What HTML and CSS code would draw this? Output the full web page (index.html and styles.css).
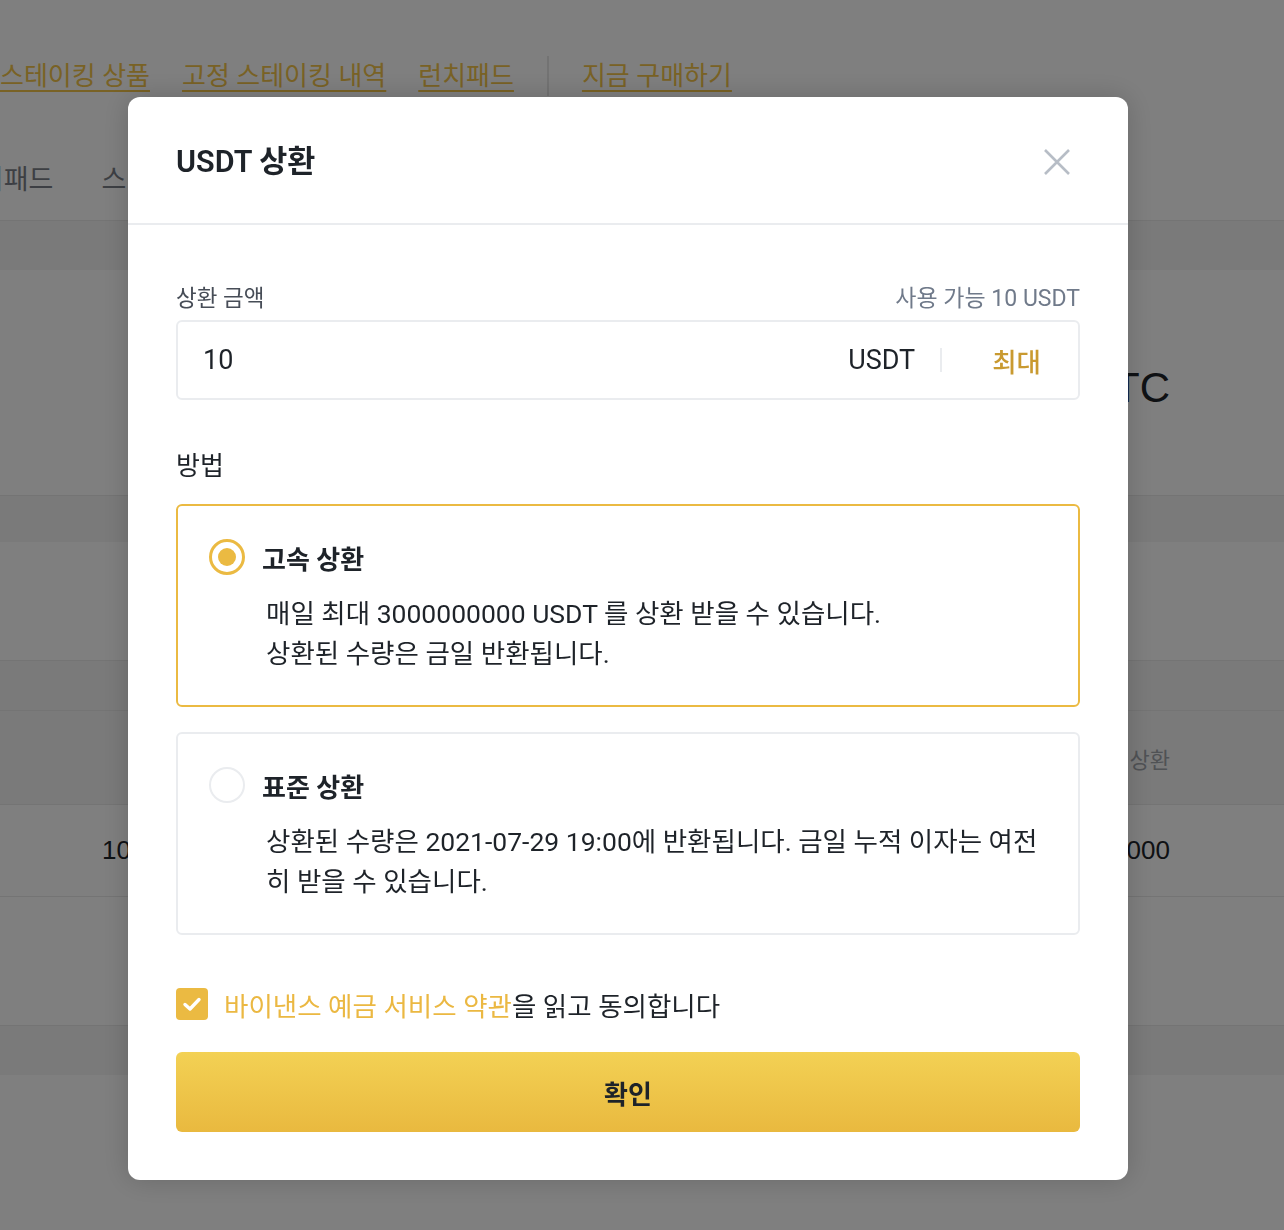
FILE: index.html
```html
<!DOCTYPE html>
<html lang="ko">
<head>
<meta charset="utf-8">
<title>USDT 상환</title>
<link rel="stylesheet" href="styles.css">
</head>
<body>
<div class="page">
  <nav class="topbar">
    <a class="toplink">스테이킹 상품</a>
    <a class="toplink">고정 스테이킹 내역</a>
    <a class="toplink">런치패드</a>
    <span class="topdivider"></span>
    <a class="toplink">지금 구매하기</a>
  </nav>
  <div class="tabs">
    <span class="tab tab-first">런치패드</span>
    <span class="tab">스테이킹</span>
  </div>
  <div class="band"></div>
  <div class="hero"><span class="hero-coin">BTC</span></div>
  <div class="band band-short"></div>
  <div class="blank blank-mid"></div>
  <div class="band"></div>
  <div class="thead"><span class="thead-cell">고속 상환</span></div>
  <div class="trow"><span class="trow-left">10 USDT</span><span class="trow-right">1000</span></div>
  <div class="blank blank-low"></div>
  <div class="band"></div>
  <div class="blank"></div>
</div>

<div class="overlay">
  <div class="modal">
    <div class="modal-header">
      <h2 class="modal-title">USDT 상환</h2>
      <button class="close-btn" aria-label="닫기">
        <svg width="28" height="28" viewBox="0 0 28 28"><path d="M2 2 L26 26 M26 2 L2 26" stroke="#b7bdc6" stroke-width="2.6" fill="none"/></svg>
      </button>
    </div>
    <div class="modal-body">
      <div class="label-row">
        <span class="label">상환 금액</span>
        <span class="available">사용 가능 10 USDT</span>
      </div>
      <div class="amount-input">
        <span class="amount-value">10</span>
        <span class="amount-unit">USDT</span>
        <span class="amount-divider"></span>
        <span class="amount-max">최대</span>
      </div>

      <div class="method-title">방법</div>

      <div class="option option-active">
        <div class="option-head">
          <span class="radio radio-on"><span class="radio-dot"></span></span>
          <span class="option-name">고속 상환</span>
        </div>
        <p class="option-desc">매일 최대 3000000000 USDT 를 상환 받을 수 있습니다.<br>상환된 수량은 금일 반환됩니다.</p>
      </div>

      <div class="option">
        <div class="option-head">
          <span class="radio"></span>
          <span class="option-name">표준 상환</span>
        </div>
        <p class="option-desc">상환된 수량은 2021-07-29 19:00에 반환됩니다. 금일 누적 이자는 여전히 받을 수 있습니다.</p>
      </div>

      <label class="agree">
        <span class="checkbox">
          <svg width="32" height="32" viewBox="0 0 32 32"><path d="M9 16.5 L14 21 L23 11.5" stroke="#fff" stroke-width="3.4" stroke-linecap="round" stroke-linejoin="round" fill="none"/></svg>
        </span>
        <span class="agree-text"><span class="agree-link">바이낸스 예금 서비스 약관</span>을 읽고 동의합니다</span>
      </label>

      <button class="confirm">확인</button>
    </div>
  </div>
</div>
</body>
</html>
```

FILE: styles.css
```css
* { box-sizing: border-box; }

html, body {
  margin: 0;
  padding: 0;
}

body {
  font-family: Roboto, "Noto Sans CJK KR", sans-serif;
  color: #1e2329;
  background: #ffffff;
  overflow: hidden;
}

/* ---------- background page ---------- */
.page {
  width: 1284px;
  height: 1230px;
  overflow: hidden;
}

.topbar {
  height: 130px;
  padding-top: 22px;
  display: flex;
  align-items: center;
  gap: 32px;
}

.toplink {
  font-size: 26px;
  line-height: 40px;
  color: #f2c44a;
  text-decoration: underline;
  text-decoration-thickness: 2px;
  text-underline-offset: 5px;
  white-space: nowrap;
}

.topdivider {
  width: 2px;
  height: 40px;
  background: #e6e6e6;
  margin: 0 1px;
}

.tabs {
  height: 90px;
  padding-top: 4px;
  display: flex;
  align-items: center;
  gap: 48px;
}

.tab {
  font-size: 27px;
  color: #7a7f88;
  white-space: nowrap;
}

.tab-first {
  margin-left: -46px;
}

.band {
  height: 50px;
  background: #f5f5f5;
  border-top: 1px solid #e8e8e8;
}

.band-short { height: 47px; }

.hero {
  height: 225px;
  display: flex;
  align-items: center;
  justify-content: flex-end;
  padding-right: 114px;
  padding-top: 11px;
}

.hero-coin {
  font-family: "Liberation Sans", Arial, sans-serif;
  font-size: 42px;
  color: #1e2329;
}

.blank { height: 160px; }
.blank-mid { height: 118px; }
.blank-low { height: 128px; }

.thead {
  height: 94px;
  background: #f5f5f5;
  border-top: 1px solid #e8e8e8;
  display: flex;
  align-items: center;
  justify-content: flex-end;
  padding-right: 114px;
}

.thead-cell {
  font-size: 22px;
  color: #a0a4ab;
}

.trow {
  height: 93px;
  border-top: 1px solid #e8e8e8;
  border-bottom: 1px solid #e8e8e8;
  display: flex;
  align-items: center;
  justify-content: space-between;
  padding: 0 114px 0 102px;
}

.trow-left, .trow-right {
  font-family: "Liberation Sans", Arial, sans-serif;
  font-size: 26px;
  color: #1e2329;
}

/* ---------- overlay + modal ---------- */
.overlay {
  position: fixed;
  inset: 0;
  background: rgba(0, 0, 0, 0.5);
  padding-top: 97px;
  padding-left: 128px;
}

.modal {
  width: 1000px;
  background: #ffffff;
  border-radius: 12px;
  box-shadow: 0 0 28px rgba(0, 0, 0, 0.18);
}

.modal-header {
  height: 128px;
  padding: 4px 56px 0 48px;
  display: flex;
  align-items: center;
  justify-content: space-between;
  border-bottom: 2px solid #eaecef;
}

.modal-title {
  margin: 0;
  font-size: 30.5px;
  font-weight: 600;
  color: #1e2329;
  line-height: 40px;
}

.close-btn {
  border: 0;
  background: none;
  padding: 0;
  width: 30px;
  height: 30px;
  display: flex;
  align-items: center;
  justify-content: center;
  cursor: pointer;
}

.modal-body {
  padding: 57px 48px 48px;
}

.label-row {
  display: flex;
  justify-content: space-between;
  align-items: center;
  height: 28px;
  margin-bottom: 10px;
}

.label {
  font-size: 22.5px;
  color: #474d57;
}

.available {
  font-size: 23px;
  color: #707a8a;
}

.amount-input {
  height: 80px;
  border: 2px solid #eaecef;
  border-radius: 6px;
  display: flex;
  align-items: center;
  padding: 0 37px 0 25px;
}

.amount-value {
  flex: 1;
  font-size: 27px;
  color: #1e2329;
}

.amount-unit {
  font-size: 27px;
  color: #1e2329;
}

.amount-divider {
  width: 2px;
  height: 24px;
  background: #eaecef;
  margin: 0 50px 0 25px;
}

.amount-max {
  font-size: 26.5px;
  font-weight: 500;
  color: #c99a30;
}

.method-title {
  margin-top: 50px;
  font-size: 26px;
  line-height: 32px;
  color: #1e2329;
}

.option {
  margin-top: 25px;
  height: 203px;
  border: 2px solid #eaecef;
  border-radius: 6px;
  padding: 35px 32px 0 31px;
}

.option-active {
  margin-top: 22px;
  border-color: #ebba42;
}

.option-head {
  display: flex;
  align-items: center;
  gap: 17px;
  height: 32px;
}

.radio {
  width: 36px;
  height: 36px;
  border-radius: 50%;
  border: 2px solid #eaecef;
  display: flex;
  align-items: center;
  justify-content: center;
  flex: none;
}

.radio-on {
  border: 3px solid #ebba42;
}

.radio-dot {
  width: 18px;
  height: 18px;
  border-radius: 50%;
  background: #ebba42;
}

.option-name {
  font-size: 26px;
  font-weight: 700;
  color: #1e2329;
}

.option-desc {
  margin: 21px 0 0 57px;
  font-size: 26.5px;
  line-height: 40px;
  color: #1e2329;
}

.agree {
  margin-top: 53px;
  display: flex;
  align-items: center;
  gap: 16px;
  height: 32px;
}

.checkbox {
  width: 32px;
  height: 32px;
  border-radius: 4px;
  background: #ebba42;
  display: flex;
  flex: none;
}

.agree-text {
  font-size: 26.5px;
  color: #1e2329;
}

.agree-link {
  color: #ebb842;
}

.confirm {
  margin-top: 32px;
  width: 100%;
  height: 80px;
  border: 0;
  border-radius: 6px;
  background: linear-gradient(180deg, #f3d154 0%, #e9b93f 100%);
  font-family: Roboto, "Noto Sans CJK KR", sans-serif;
  font-size: 26px;
  font-weight: 600;
  color: #1e2329;
  cursor: pointer;
}
```
